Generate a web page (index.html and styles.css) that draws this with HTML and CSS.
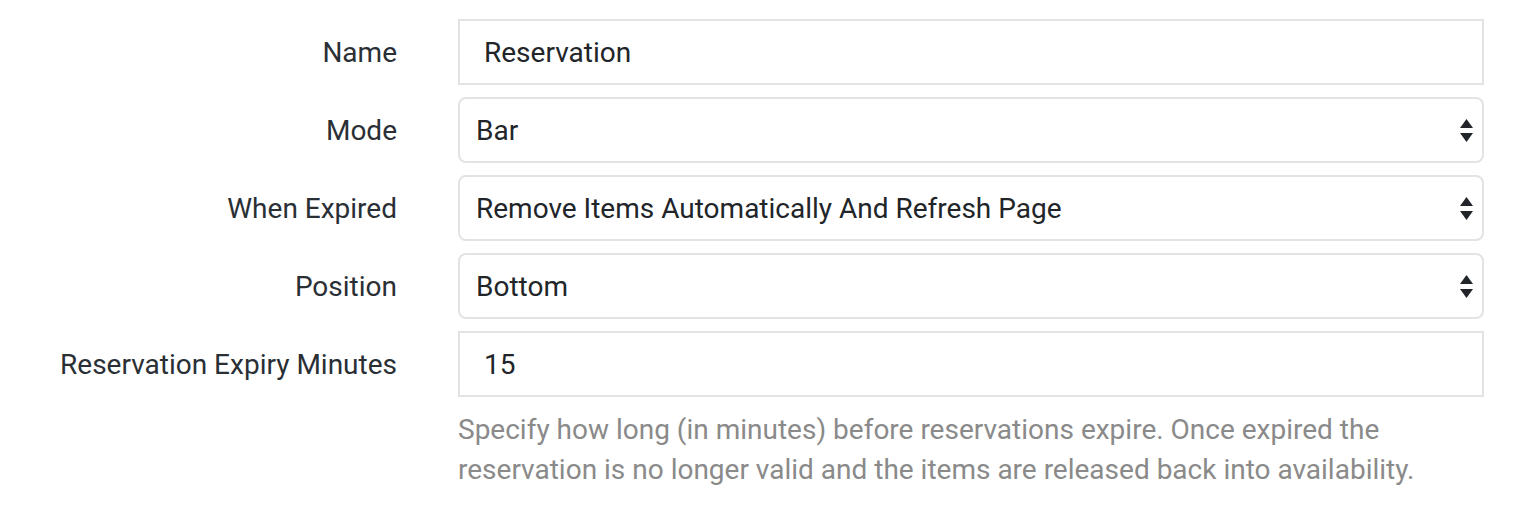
FILE: index.html
```html
<!DOCTYPE html>
<html>
<head>
<meta charset="utf-8">
<link rel="stylesheet" href="styles.css">
</head>
<body>
<form class="form">
  <div class="row">
    <label class="label">Name</label>
    <div class="field"><input class="input" type="text" value="Reservation"></div>
  </div>
  <div class="row">
    <label class="label">Mode</label>
    <div class="field"><select class="select"><option>Bar</option></select></div>
  </div>
  <div class="row">
    <label class="label">When Expired</label>
    <div class="field"><select class="select"><option>Remove Items Automatically And Refresh Page</option></select></div>
  </div>
  <div class="row">
    <label class="label">Position</label>
    <div class="field"><select class="select"><option>Bottom</option></select></div>
  </div>
  <div class="row">
    <label class="label">Reservation Expiry Minutes</label>
    <div class="field">
      <input class="input" type="text" value="15">
      <p class="help">Specify how long (in minutes) before reservations expire. Once expired the reservation is no longer valid and the items are released back into availability.</p>
    </div>
  </div>
</form>
</body>
</html>
```

FILE: styles.css
```css
* { box-sizing: border-box; }
html, body { margin: 0; padding: 0; background: #fff; }
body {
  font-family: Roboto, "Noto Sans", sans-serif;
  font-size: 28px;
  color: #212529;
}
.form {
  display: flex;
  flex-direction: column;
  gap: 12px;
  padding-top: 19px;
}
.row {
  display: grid;
  grid-template-columns: 397px 1026px;
  column-gap: 61px;
  align-items: start;
}
.label {
  height: 66px;
  padding-top: 0;
  display: flex;
  align-items: center;
  justify-content: flex-end;
  color: #2a2f36;
}
.input, .select {
  display: block;
  width: 100%;
  height: 66px;
  margin: 0;
  font-family: inherit;
  font-size: 28px;
  color: #212529;
  background: #fff;
  border: 2px solid #e3e3e3;
  outline: none;
}
.input {
  border-radius: 0;
  padding: 0 24px;
}
.select {
  -webkit-appearance: none;
  appearance: none;
  border-radius: 8px;
  padding: 0 40px 0 16px;
  background-image: url("data:image/svg+xml,%3Csvg xmlns='http://www.w3.org/2000/svg' width='13' height='23' viewBox='0 0 13 23'%3E%3Cpath d='M6.5 0L13 9H0z' fill='%23212529'/%3E%3Cpath d='M0 14h13l-6.5 9z' fill='%23212529'/%3E%3C/svg%3E");
  background-repeat: no-repeat;
  background-position: right 9px center;
  background-size: 13px 23px;
}
.help {
  margin: 13px 0 0;
  line-height: 40px;
  color: #8a8a8a;
  padding-right: 60px;
}
```
